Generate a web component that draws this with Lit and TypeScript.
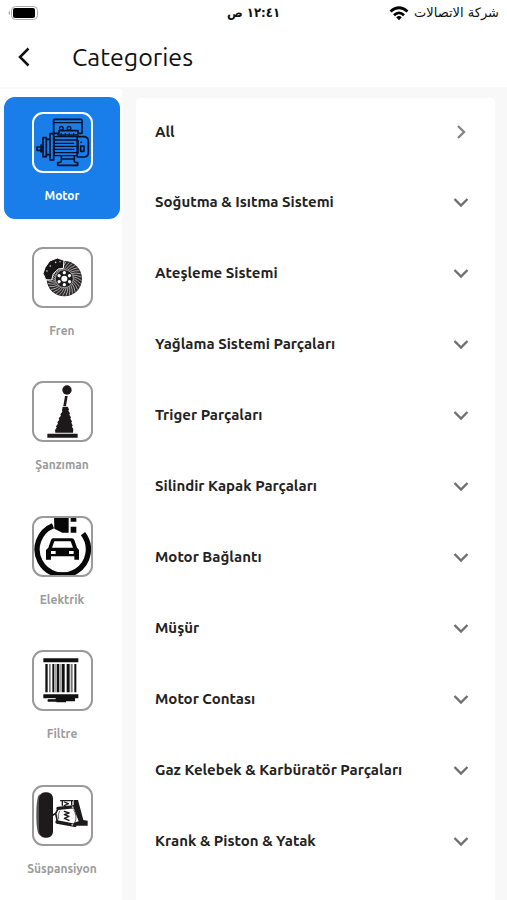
import { LitElement, html, svg, css } from "lit";
import { customElement, state } from "lit/decorators.js";

const range = (n: number) => Array.from({ length: n }, (_, i) => i);

const motorArt = svg`
  <g fill="none" stroke="#04122a" stroke-width="5" stroke-linejoin="round" stroke-linecap="round">
    <path d="M160 128V91q0-3 3-3h79q3 0 3 3v39h-12v-8h-57v8h-16z"/>
    <path d="M162 98h82" stroke-width="4"/>
    <circle cx="183" cy="115" r="5.500" stroke-width="4"/><circle cx="206" cy="115" r="5.500" stroke-width="4"/>
    <path d="M172 135h62M183 130v7M195 130v7M207 130v7M220 130v7" stroke-width="4"/>
    <path d="M162 140h69v57h-69zM162 150h66M162 160h58M162 169h66M162 178h58M162 188h66" stroke-width="4"/>
    <path d="M231 140h22q11 2 11 14v34q0 11-11 13h-22zM233 152v36"/>
    <path d="M241 168h10v16h-10z"/><path d="M242 157h1"/>
    <path d="M149 131h11v79h-11zM128 143h10v57h-10zM138 148h11v46h-11"/>
    <path d="M128 171h-18v10h18M122 165v21"/>
    <path d="M183 199v15q-1 4-11 4v8h60v-8q-9 0-10-4v-15M183 207h38"/>
  </g>`;

const brakeArt = svg`
  <circle cx="132" cy="114" r="53" fill="#2b2729"/>
  <g stroke="#fff" stroke-width="1.600" fill="none">
    ${range(32).map((i) => svg`<path d="M132 86q5-12 15-21" transform="rotate(${i * 11.25} 132 114)"/>`)}
  </g>
  <circle cx="132" cy="114" r="27" fill="#1d1a1b" stroke="#ddd" stroke-width="2"/>
  <circle cx="132" cy="114" r="9" fill="#fff"/>
  ${range(6).map((i) => svg`<circle cx="132" cy="96" r="5" fill="#fff" transform="rotate(${i * 60} 132 114)"/>`)}
  <path d="M68 99l6-18 14-20 23-9 20 7-2 24-15 2-15 14-5 19-18-1-6-15z" fill="#171516" stroke="#fff" stroke-width="3"/>
  <g fill="#ddd"><circle cx="80" cy="91" r="2.500"/><circle cx="90" cy="76" r="2.500"/><circle cx="106" cy="65" r="2.500"/><circle cx="119" cy="63" r="2"/></g>`;

const shifterArt = svg`
  <g fill="#1d191b">
    <circle cx="140" cy="44" r="14"/>
    <path d="M134 62h8l-5 30h-8z"/>
    <path d="M127 94h15l4 8-2 4 5 8-2 4 5 8-2 4 5 8-2 4 4 8-2 4 4 8-1 10h-53l-1-8 5-7-2-4 6-8-2-4 6-8-2-4 7-8-2-4 6-8-1-4z"/>
    <path d="M81 175h91v12H81z"/>
  </g>`;

const chargeArt = svg`
  <path d="M98 44A77 77 0 1 0 188 68" fill="none" stroke="#080808" stroke-width="16"/>
  <path d="M101 15h44v50h-19l-24-12zM151 15h17v17h-17zM151 47h17v18h-17zM90 184h72l-14 15h-44z" fill="#080808"/>
  <path fill-rule="evenodd" fill="#080808" d="M98 82h57q5 0 7 5l8 23 6 7v29h-14v-10H92v10H77v-29l7-7 8-23q2-5 6-5zM102 91l-7 19h63l-7-19zM92 120v9h14v-9zM146 120v9h14v-9z"/>`;

const filterArt = svg`
  <g fill="#111">
    <path d="M69 39h105v12H69zM69 147h105v12h-10v9h-27v3h-29v-2H82v-10H69z"/>
    <path d="M75 56h7v85h-7zM96 56h6v85h-6zM109 56h8v85h-8zM124 56h9v85h-9zM139 56h9v85h-9zM162 56h6v85h-6z"/>
  </g>
  <path d="M86 56h5v85h-5zM104 56h2v85h-2zM120 56h2v85h-2zM151 56h6v85h-6z" fill="#777"/>
  <path d="M80 160h26" stroke="#fff" stroke-width="3"/>`;

const suspensionArt = svg`
  <path d="M58 40q-10 8-10 62t10 62z" fill="#555"/>
  <rect x="56" y="35" width="42" height="136" rx="18" fill="#1c1a1b"/>
  <g fill="none" stroke="#1c1a1b" stroke-linecap="round" stroke-linejoin="round">
    <path d="M113 83l52-5M110 124l54 10" stroke-width="10"/>
    <path d="M98 103l8-5 8-15M106 98l5 24" stroke-width="5"/>
    <path d="M121 60h36M126 62v12M154 62v10" stroke-width="4"/>
    <path d="M132 92l14 5-14 5 14 5-14 6 14 6M132 64l12 5-12 6" stroke-width="4"/>
    <path d="M160 88q12 17 4 38M118 91q-8 12-3 24" stroke-width="2"/>
  </g>
  <path d="M160 58h13l16 60 13 2v15h-42v-9l15-4-15-40z" fill="#1c1a1b"/>
  <g fill="#bbb"><circle cx="157" cy="80" r="3"/><circle cx="156" cy="132" r="3"/></g>`;

const categories = [
  { name: "Motor", box: "95 66 183 183", art: motorArt },
  { name: "Fren", box: "35 19 183 183", art: brakeArt },
  { name: "Şanzıman", box: "35 17 183 183", art: shifterArt },
  { name: "Elektrik", box: "35 15 183 183", art: chargeArt },
  { name: "Filtre", box: "35 14 183 183", art: filterArt },
  { name: "Süspansiyon", box: "35 13 183 183", art: suspensionArt },
];

const groups = [
  "Soğutma & Isıtma Sistemi",
  "Ateşleme Sistemi",
  "Yağlama Sistemi Parçaları",
  "Triger Parçaları",
  "Silindir Kapak Parçaları",
  "Motor Bağlantı",
  "Müşür",
  "Motor Contası",
  "Gaz Kelebek & Karbüratör Parçaları",
  "Krank & Piston & Yatak",
];

@customElement("app-root")
export class AppRoot extends LitElement {
  @state() private selected = 0;

  static styles = css`
    :host {
      display: flex;
      flex-direction: column;
      min-height: 100vh;
      box-sizing: border-box;
      background: #f8f8f8;
      color: #212121;
      font-family: Ubuntu, "Noto Sans", "DejaVu Sans", sans-serif;
    }
    button {
      border: 0;
      margin: 0;
      padding: 0;
      background: none;
      color: inherit;
      font: inherit;
      cursor: pointer;
    }
    svg { display: block; }
    .top { background: #fff; }
    .status {
      display: grid;
      grid-template-columns: 1fr auto 1fr;
      align-items: center;
      height: 26px;
      padding: 0 8px;
      color: #111;
      font: 13px/20px "DejaVu Sans", sans-serif;
    }
    .time {
      font-family: "DejaVu Sans Condensed", "DejaVu Sans", sans-serif;
      font-weight: 700;
    }
    .carrier {
      display: flex;
      align-items: center;
      justify-content: flex-start;
      gap: 5px;
    }
    .battery { justify-self: end; }
    .bar {
      display: flex;
      align-items: center;
      height: 61px;
      gap: 32px;
      padding: 0 8px;
    }
    .back {
      display: grid;
      place-items: center;
      width: 32px;
      height: 60px;
    }
    .title {
      margin: 0;
      color: #111;
      font-size: 25px;
      line-height: 32px;
      font-weight: 400;
    }
    .body {
      display: flex;
      flex: 1;
      align-items: stretch;
    }
    .side {
      display: flex;
      flex-direction: column;
      justify-content: space-between;
      gap: 12px;
      flex: none;
      width: 122px;
      box-sizing: border-box;
      margin-top: 2px;
      padding: 8px 2px 8px 4px;
      background: #fff;
    }
    .cat {
      display: flex;
      flex-direction: column;
      align-items: center;
      gap: 13px;
      height: 122px;
      box-sizing: border-box;
      padding-top: 15px;
      border-radius: 11px;
      color: #9c9c9c;
      font-size: 12px;
      line-height: 20px;
      font-weight: 700;
    }
    .cat.on { background: #1a7eea; color: #fff; }
    .thumb {
      display: block;
      width: 61px;
      height: 61px;
      box-sizing: border-box;
      border: 2px solid #9a9a9a;
      border-radius: 11px;
      background: #fff;
      overflow: hidden;
    }
    .on .thumb { border-color: #fff; background: none; }
    .thumb svg { width: 61px; height: 61px; margin: -2px; }
    .card {
      flex: 1;
      min-width: 0;
      margin: 11px 12px 0 14px;
      border-radius: 4px 4px 0 0;
      background: #fff;
    }
    .row {
      display: flex;
      align-items: center;
      justify-content: space-between;
      width: 100%;
      height: 71px;
      padding: 0 24px 0 19px;
      color: #222;
      font-size: 15px;
      line-height: 20px;
      font-weight: 700;
      text-align: left;
    }
    .row.all { height: 68px; }
  `;

  render() {
    return html`
      <header class="top">
        <div class="status" dir="rtl">
          <div class="carrier">
            <span>شركة الاتصالات</span>
            <svg width="20" height="15" viewBox="0 0 20 15" aria-hidden="true">
              <g fill="none" stroke="#000" stroke-width="2.700">
                <path d="M1.500 5.500Q10-2 18.500 5.500M5 9.200Q10 4.500 15 9.200"/>
              </g>
              <path d="M7.200 11.200Q10 8.800 12.800 11.200L10 14.200z"/>
            </svg>
          </div>
          <span class="time">١٢:٤١ ص</span>
          <svg class="battery" width="30" height="14" viewBox="0 0 30 14" aria-hidden="true">
            <rect x="3.500" y=".5" width="26" height="13" rx="4" fill="#fff" stroke="#aaa"/>
            <rect x="5" y="2" width="22" height="10" rx="2"/>
            <path d="M2 5v4Q.5 8.500.5 7T2 5z" fill="#aaa"/>
          </svg>
        </div>
        <div class="bar">
          <button class="back" aria-label="Back">
            <svg width="14" height="20" viewBox="0 0 14 20" aria-hidden="true">
              <path d="M11.500 1.500L3 10l8.500 8.500" fill="none" stroke="#111" stroke-width="2.500"/>
            </svg>
          </button>
          <h1 class="title">Categories</h1>
        </div>
      </header>
      <main class="body">
        <nav class="side">
          ${categories.map(
            (c, i) => html`
              <button class="cat ${i === this.selected ? "on" : ""}" @click=${() => (this.selected = i)}>
                <span class="thumb"><svg viewBox=${c.box} aria-hidden="true">${c.art}</svg></span>
                <span>${c.name}</span>
              </button>
            `
          )}
        </nav>
        <section class="card">
          <button class="row all">
            <span>All</span>
            <svg width="20" height="20" viewBox="0 0 20 20" aria-hidden="true">
              <path d="M7 4l6 6-6 6" fill="none" stroke="#858585" stroke-width="2.400"/>
            </svg>
          </button>
          ${groups.map(
            (g) => html`
              <button class="row" aria-expanded="false">
                <span>${g}</span>
                <svg width="20" height="20" viewBox="0 0 20 20" aria-hidden="true">
                  <path d="M3.500 7l6.500 6.500L16.500 7" fill="none" stroke="#707070" stroke-width="2.400"/>
                </svg>
              </button>
            `
          )}
        </section>
      </main>
    `;
  }
}
